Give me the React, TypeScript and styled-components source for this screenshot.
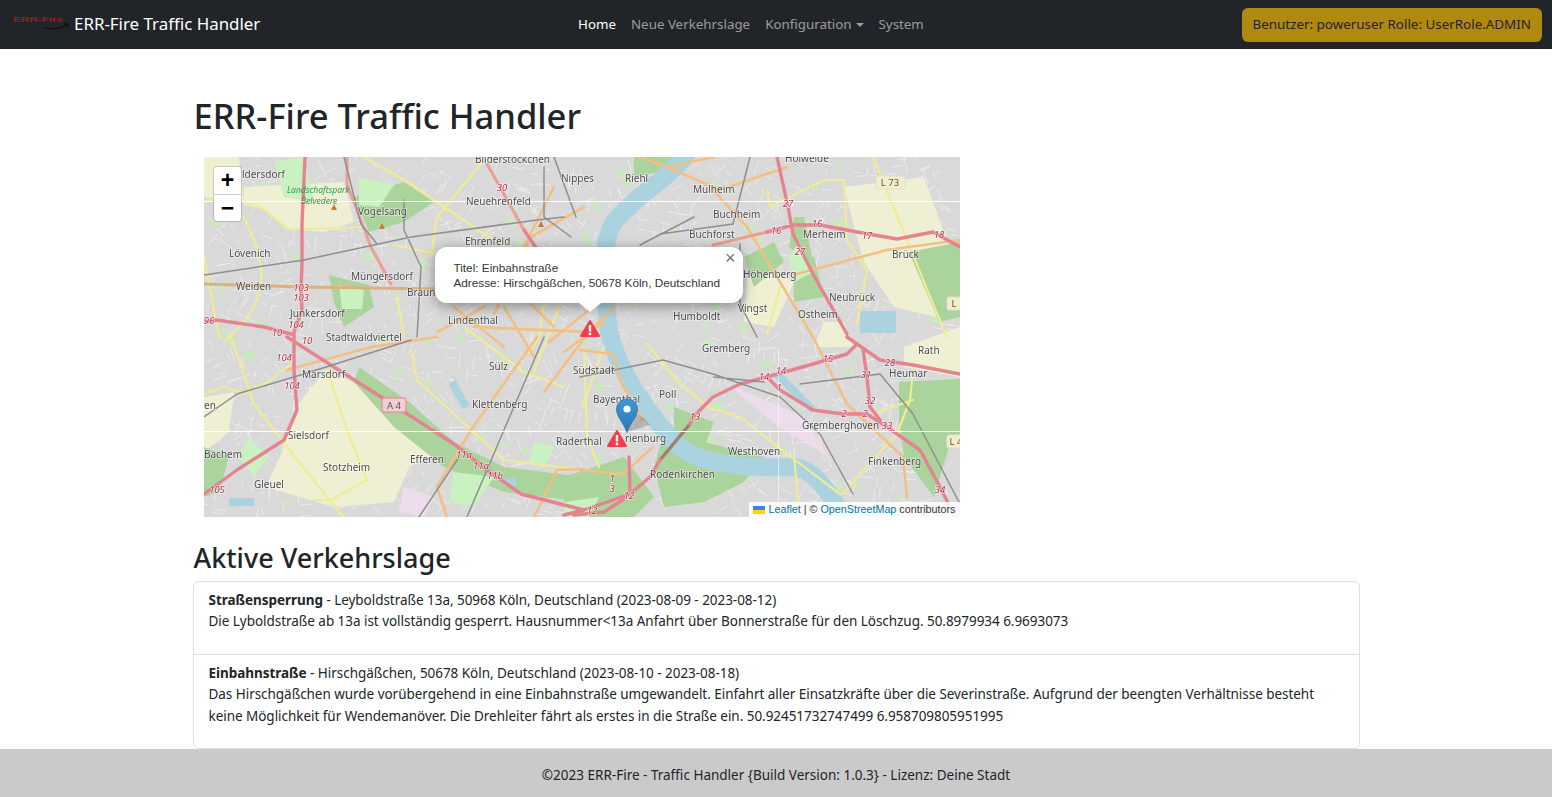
import React from "react";
import styled, { createGlobalStyle } from "styled-components";

const Global = createGlobalStyle`
  html, body { margin: 0; padding: 0; background: #fff; }
  body { font-family: "Noto Sans", "Open Sans", sans-serif; color: #212529; font-size: 13.5px; line-height: 1.5; }
  * { box-sizing: border-box; }
`;
const Page = styled.div`display:flex;flex-direction:column;height:797px;overflow:hidden;`;
const Navbar = styled.nav`height:49px;flex:none;background:#212529;display:flex;justify-content:space-between;align-items:center;padding:0 10px 0 12px;`;
const Brand = styled.div`display:flex;align-items:center;gap:5px;color:#fff;font-size:16.9px;line-height:24px;padding-bottom:1px;`;
const Links = styled.div`display:flex;gap:15px;font-size:13.35px;`;
const NavLink = styled.span<{ $active?: boolean }>`color:${p => (p.$active ? "#fff" : "rgba(255,255,255,.55)")};`;
const Caret = styled.i`display:inline-block;margin-left:4px;vertical-align:2px;border-top:4.3px solid;border-left:4.3px solid transparent;border-right:4.3px solid transparent;`;
const UserBadge = styled.div`height:34px;display:flex;align-items:center;padding:0 11px;border-radius:6px;background:#b0890f;color:#212529;font-size:13.4px;`;
const Main = styled.main`width:1167px;margin:0 auto;flex:1;padding-top:42px;`;
const H1 = styled.h1`margin:0 0 16px 1px;font-size:34.5px;line-height:50px;font-weight:500;`;
const H2 = styled.h2`margin:24px 0 6px 1px;font-size:27px;line-height:34px;font-weight:500;`;
const MapBox = styled.div`position:relative;width:756px;height:360px;margin-left:11px;overflow:hidden;background:#d9d9d9;`;
const MapSvg = styled.svg`display:block;filter:blur(.45px);`;
const MapLabel = styled.text`font:10px "Noto Sans",sans-serif;fill:#4c4c4c;paint-order:stroke;stroke:rgba(255,255,255,.55);stroke-width:1.5px;`;
const RoadNo = styled.text`font:italic 9.5px "Noto Sans",sans-serif;fill:#b3304e;text-anchor:middle;paint-order:stroke;stroke:rgba(255,255,255,.6);stroke-width:1.5px;`;
const ParkLabel = styled.text`font:italic 8.5px "Noto Sans",sans-serif;fill:#2f9a53;`;
const Shield = styled.text`font:9.5px "Noto Sans",sans-serif;fill:#555;text-anchor:middle;`;
const Zoom = styled.div`position:absolute;left:10px;top:10px;width:27px;background:#fff;border-radius:3px;box-shadow:0 0 0 1px rgba(0,0,0,.15);`;
const ZoomBtn = styled.div`height:27px;display:flex;align-items:center;justify-content:center;font:700 23px "Liberation Sans",sans-serif;color:#000;padding-left:1px;& + &{border-top:1px solid #ccc;}`;
const Popup = styled.div`position:absolute;left:231px;top:90px;width:308px;height:56px;background:#fff;border-radius:12px;box-shadow:0 3px 14px rgba(0,0,0,.4);padding:13px 19px;font:11.75px/15px "Liberation Sans",sans-serif;color:#333;white-space:nowrap;`;
const Tip = styled.div`position:absolute;left:144px;top:56px;border-top:9px solid #fff;border-left:11px solid transparent;border-right:11px solid transparent;`;
const Close = styled.span`position:absolute;right:7px;top:1px;font:18px/20px "Liberation Sans",sans-serif;color:#757575;`;
const Attribution = styled.div`position:absolute;right:0;bottom:0;height:15px;padding:0 4px;background:rgba(255,255,255,.85);font:10.75px/15px "Liberation Sans",sans-serif;color:#333;white-space:pre;`;
const AttrLink = styled.span`color:#0078a8;`;
const Flag = styled.svg`margin-right:3px;vertical-align:-0.5px;`;
const List = styled.div`border:1px solid rgba(0,0,0,.125);border-radius:6px;`;
const Item = styled.div<{ $h: number }>`height:${p => p.$h}px;padding:7.5px 15px;line-height:21.6px;letter-spacing:-.04px;& + &{border-top:1px solid rgba(0,0,0,.125);}`;
const Footer = styled.footer`height:48px;flex:none;background:#cacaca;display:flex;align-items:center;justify-content:center;font-size:13.5px;padding-top:4px;`;

const seeded = (seed: number) => {
  let s = seed;
  return () => ((s = (s * 16807) % 2147483647) / 2147483647);
};
const streets = (() => {
  const r = seeded(7);
  let d = "";
  for (let i = 0; i < 1500; i++) {
    const x = r() * 756, y = r() * 360;
    const base = (Math.floor(x / 55) * 1.3 + Math.floor(y / 45) * 0.7) % Math.PI;
    const a = base + (r() > 0.5 ? Math.PI / 2 : 0);
    const l = 4 + r() * 11;
    d += `M${x.toFixed(1)} ${y.toFixed(1)}l${(Math.cos(a) * l).toFixed(1)} ${(Math.sin(a) * l).toFixed(1)}`;
  }
  return d;
})();
const patches = (() => {
  const r = seeded(31);
  let d = "";
  for (let i = 0; i < 130; i++) {
    const x = r() * 756, y = r() * 360, w = 3 + r() * 9, h = 3 + r() * 7;
    d += `M${x.toFixed(1)} ${y.toFixed(1)}h${w.toFixed(1)}l${(r() * 3).toFixed(1)} ${h.toFixed(1)}h${(-w).toFixed(1)}z`;
  }
  return d;
})();

const fields = "M40 30L140 25 150 65 120 75 85 72 60 52 40 48Z M0 0H35L40 45 0 40Z M122 212L178 240 245 290 205 310 190 345 130 350 62 330 78 295 92 250Z M0 240L30 235 25 275 0 295Z M640 30L720 20 745 90 756 140 732 160 690 150 660 105 650 70Z M545 100L590 125 570 170 540 165Z M700 190L756 170 756 220 700 210Z M610 190L650 190 640 165 620 165Z";
const green = "M150 40L200 25 230 45 200 65 165 75Z M155 210L205 245 250 285 300 310 380 320 380 345 300 335 240 310 190 270 150 225Z M360 320L420 300 450 340 430 360 360 360Z M460 275L560 300 540 325 500 345 460 350 450 310Z M695 225L756 222 756 280 745 290 730 340 700 300 695 265Z M705 95L756 85 756 160 735 165Z M590 145L620 140 610 100 590 100Z M585 90L610 110 600 60 590 60Z M430 0L470 0 455 15 430 20Z M395 322L415 322 420 345 398 355Z M550 130L580 105 570 85 540 100Z M470 250L510 265 500 290 470 280Z M0 290L25 300 15 335 0 340Z M125 118L165 128 170 150 140 170 130 145Z";
const lightGreen = "M70 5L100 0 110 45 80 40Z M155 20L190 28 175 50 155 48Z M595 85L610 115 590 125 585 100Z M135 128L160 133 158 152 138 152Z M230 125L250 120 260 140 240 150Z M360 345L395 340 385 360 360 360Z M250 315L290 320 270 350 245 345Z M45 280L65 300 50 320 35 300Z M330 285L350 290 340 310 325 305Z";
const tan = "M200 330L230 340 220 360 195 355Z M520 225L600 260 625 300 575 270Z";

type R = [string, string, number];
const roads: R[] = [
  ["M43 47C50 47 63 53 83 72L113 72 157 70 M160 0L207 27 240 50 280 77 313 97 M280 3L233 60 227 100 M190 88L233 97 M193 140L200 180 M27 180L50 247 83 290 123 340 140 360 M123 213L143 273 163 323 127 343 110 343 M0 237L20 230 40 237 67 223 90 205 M207 193L213 223 300 303 380 313 M563 33L566 50 620 23 640 23 643 83 663 113 653 167 M669 0L699 73 729 147 743 180 M503 250L536 260 583 297 636 337 M443 187L476 227 509 253 M669 257L709 243 M709 213L706 243 693 277 659 313 639 337 M563 177L576 130 M0 45L35 35 M0 100L15 180 M325 195L335 180 345 110 M380 190L383 280 395 310 M20 185C60 150 70 120 40 60 M590 300L596 360 M260 170L320 215 360 230 M355 150L330 215 M400 190L378 250","#efec94",2.2],
  ["M436 0L463 10 516 33 583 10 M463 10L510 0 M509 33L543 70 609 180 M589 118L683 93 756 83 M83 213L167 190 233 180 M333 180L267 273 233 330 243 360 M376 313L419 317 449 290 M376 193L409 197 416 223 439 263 M609 180L643 247 699 300 703 340 M380 312L353 313 330 360 M380 50L327 80 290 157 M280 150L233 175 M330 90L380 130 M300 120L350 170 M350 30L320 90 M385 175L270 170 M385 175L340 235 M395 145L345 185 M250 150L300 190 M300 150L330 200 M360 195L400 165 M385 175L410 150","#f3bf82",2.6],
  ["M0 127L100 130 233 132","#dcb27c",3],
  ["M143 0L143 27 167 90 187 127 M283 7L320 73 M509 88L563 75","#eb9f8f",3],
  ["M456 303L486 267","#a08070",3.5],
  ["M101 0L98 67 98 107 97 133 98 153 90 175 M13 163L60 170 87 177 M83 180L177 240 250 287 283 313 317 337 380 353 409 343 426 337 446 320 456 303 M486 267L489 260 509 240 536 227 563 220 609 207 643 197 653 187 643 180 M653 187L676 203 709 208 756 217 M90 175L90 213 93 253 80 283 33 313 0 337 M563 220L576 233 609 253 639 257 663 257 683 270 716 293 736 330 746 350 M659 193L663 220 666 250 676 263 M573 0L584 50 589 77 609 117 643 177 M563 75L589 68 616 68 653 75 693 82 729 75 756 90 M0 165L13 163 M380 353L360 358 M426 337L425 300 M320 73L345 110 M420 342L400 355 370 358","#e5838f",3.4],
  ["M0 118L100 103 207 80 333 63 360 60 M140 0L157 67 173 87 M200 43L200 73 217 110 213 180 M340 10L340 60 367 80 M340 180L300 273 263 360 M0 260L33 237 100 217 207 183 M376 220L459 203 509 217 576 240 616 277 649 337 M596 227L676 217 709 257 756 347 M546 0L529 67 456 77 M490 60L436 88 M536 87L536 147 553 180 M350 0L372 60 M255 300L215 360 M510 220L560 225","#8f8f8f",1.5],
];

const labels: [number, number, string][] = [
  [271,5.5,"Bilderstockchen"],[357,25,"Nippes"],[421,25,"Riehl"],[489,36,"Mülheim"],[581,5,"Holweide"],[38,21,"ldersdorf"],
  [262,48,"Neuehrenfeld"],[154,58,"Vogelsang"],[509,61,"Buchheim"],[485,81,"Buchforst"],[261,88,"Ehrenfeld"],[25,100,"Lövenich"],
  [599,81,"Merheim"],[688,101,"Brück"],[147,123,"Müngersdorf"],[539,121,"Höhenberg"],[32,133,"Weiden"],[203,139,"Braun"],
  [625,144,"Neubrück"],[86,160,"Junkersdorf"],[244,167,"Lindenthal"],[534,155,"Vingst"],[594,161,"Ostheim"],[469,163,"Humboldt"],
  [122,184,"Stadtwaldviertel"],[498,195,"Gremberg"],[98,221,"Marsdorf"],[285,213,"Sülz"],[369,217,"Südstadt"],[714,197,"Rath"],
  [685,220,"Heumar"],[268,251,"Klettenberg"],[389,246,"Bayenthal"],[455,241,"Poll"],[84,282,"Sielsdorf"],[352,288,"Raderthal"],
  [0,301,"Bachem"],[119,314,"Stotzheim"],[206,306,"Efferen"],[421,285,"rienburg"],[524,298,"Westhoven"],[598,272,"Gremberghoven"],
  [50,331,"Gleuel"],[446,321,"Rodenkirchen"],[664,308,"Finkenberg"],[0,252,"en"],
];
const numbers: [number, number, string][] = [
  [298,34,"30"],[97,134,"103"],[97,144,"103"],[5,167,"96"],[73,179,"10"],[92,171,"104"],[80,204,"104"],[103,187,"10"],[88,232,"104"],
  [260,301,"11a"],[277,312,"11a"],[291,322,"11b"],[13,336,"105"],[584,50,"27"],[572,77,"16"],[613,70,"16"],[596,98,"27"],[663,82,"17"],
  [735,81,"18"],[624,205,"15"],[560,223,"14"],[577,217,"14"],[575,234,"1"],[491,263,"13"],[686,209,"28"],[662,221,"31"],[666,247,"32"],
  [640,260,"2"],[661,260,"2"],[683,272,"33"],[736,336,"34"],[425,342,"12"],[388,357,"12"],[408,325,"1"],[408,335,"3"],
];

const MapArt = () => (
  <MapSvg width="756" height="360" viewBox="0 0 756 360">
    <rect width="756" height="360" fill="#d9d9d9" />
    <path d={streets} stroke="#f2f2f2" strokeWidth=".7" fill="none" />
    <path d={patches} fill="#c6ecb8" opacity=".8" />
    <path d={fields} fill="#eff0d3" />
    <path d={green} fill="#abd39c" />
    <path d={lightGreen} fill="#c9f2c0" />
    <path d={tan} fill="#ecdcec" />
    <path d="M487 -10C470 20 440 30 410 65C395 90 400 130 405 175C415 215 440 250 470 285C490 305 530 312 590 310C610 312 625 335 640 360" fill="none" stroke="#aad3df" strokeWidth="18" />
    <path d="M573 217L609 253" stroke="#aad3df" strokeWidth="8" />
    <path d="M248 225L262 250M660 158h28v14h-28zM25 345h25M300 325h12" stroke="#aad3df" strokeWidth="8" fill="#aad3df" />
    {roads.map(([d, c, w], i) => <path key={i} d={d} fill="none" stroke={c} strokeWidth={w} strokeLinecap="round" strokeLinejoin="round" />)}
    <rect y="44" width="756" height="1" fill="#fff" />
    <rect y="274" width="756" height="1" fill="#fff" />
    <rect x="574" width="1" y="190" height="170" fill="#fff" opacity=".55" />
    <rect x="178" y="241" width="24" height="14" rx="2" fill="#f2ced2" stroke="#e5838f" />
    <Shield x="190" y="251.5">A 4</Shield>
    <rect x="672" y="19" width="29" height="13" rx="2" fill="#f2efc8" stroke="#ddd" />
    <Shield x="686" y="29">L 73</Shield>
    <rect x="743" y="140" width="20" height="13" rx="2" fill="#f2efc8" stroke="#ddd" />
    <Shield x="750" y="150">L</Shield>
    <rect x="743" y="278" width="20" height="13" rx="2" fill="#f2efc8" stroke="#ddd" />
    <Shield x="752" y="288">L 4</Shield>
    <path d="M130 47l3 6h-6zM178 66l3 6h-6zM337 64l3 6h-6z" fill="#c77a35" />
    {labels.map(([x, y, t]) => <MapLabel key={t} x={x} y={y}>{t}</MapLabel>)}
    {numbers.map(([x, y, t], i) => <RoadNo key={i} x={x} y={y}>{t}</RoadNo>)}
    <ParkLabel x="83" y="36">Landschaftspark</ParkLabel>
    <ParkLabel x="97" y="47">Belvedere</ParkLabel>
    {[[386, 172], [413, 282]].map(([x, y], i) => (
      <g key={i} transform={`translate(${x} ${y})`}>
        <path d="M0 -8 L9 7 H-9Z" fill="#ef3e4a" stroke="#ef3e4a" strokeWidth="2" strokeLinejoin="round" />
        <rect x="-1.2" y="-4" width="2.4" height="6.5" fill="#fff" /><circle cy="5" r="1.4" fill="#fff" />
      </g>
    ))}
    <path d="M423 275L433 257 441 262 446 268Z" fill="#555" opacity=".3" />
    <defs><linearGradient id="pin" x1="0" x2="0" y1="0" y2="1"><stop offset="0" stopColor="#3f98d6" /><stop offset="1" stopColor="#2a78b8" /></linearGradient></defs>
    <path d="M423 242c-6 0-10.500 4.500-10.500 10.500c0 7 7 13 10.500 23c3.500-10 10.500-16 10.500-23c0-6-4.500-10.500-10.500-10.500z" fill="url(#pin)" stroke="#2a6ea6" strokeWidth=".7" />
    <circle cx="423" cy="252" r="3.6" fill="#fff" />
  </MapSvg>
);

export default function App() {
  return (
    <Page>
      <Global />
      <Navbar>
        <Brand>
          <svg width="57" height="24" viewBox="0 0 57 24">
            <text x="1" y="10" fontSize="8" fontWeight="700" fill="#9c1c1c" fontFamily="Liberation Sans" textLength="50" lengthAdjust="spacingAndGlyphs">ERR-Fire</text>
            <path d="M32 16q14 3 24-4m-4 0l4 0-1 3" stroke="#0b0b0b" fill="none" />
          </svg>
          ERR-Fire Traffic Handler
        </Brand>
        <Links>
          <NavLink $active>Home</NavLink>
          <NavLink>Neue Verkehrslage</NavLink>
          <NavLink>Konfiguration<Caret /></NavLink>
          <NavLink>System</NavLink>
        </Links>
        <UserBadge>Benutzer: poweruser Rolle: UserRole.ADMIN</UserBadge>
      </Navbar>
      <Main>
        <H1>ERR-Fire Traffic Handler</H1>
        <MapBox>
          <MapArt />
          <Zoom><ZoomBtn>+</ZoomBtn><ZoomBtn>−</ZoomBtn></Zoom>
          <Popup>
            Titel: Einbahnstraße<br />Adresse: Hirschgäßchen, 50678 Köln, Deutschland
            <Close>×</Close><Tip />
          </Popup>
          <Attribution>
            <Flag width="12" height="8" viewBox="0 0 12 8"><rect width="12" height="4" fill="#4C7BE1" /><rect y="4" width="12" height="4" fill="#FFD500" /></Flag>
            <AttrLink>Leaflet</AttrLink> | © <AttrLink>OpenStreetMap</AttrLink> contributors
          </Attribution>
        </MapBox>
        <H2>Aktive Verkehrslage</H2>
        <List>
          <Item $h={72}>
            <b>Straßensperrung</b> - Leyboldstraße 13a, 50968 Köln, Deutschland (2023-08-09 - 2023-08-12)<br />
            Die Lyboldstraße ab 13a ist vollständig gesperrt. Hausnummer&lt;13a Anfahrt über Bonnerstraße für den Löschzug. 50.8979934 6.9693073
          </Item>
          <Item $h={94}>
            <b>Einbahnstraße</b> - Hirschgäßchen, 50678 Köln, Deutschland (2023-08-10 - 2023-08-18)<br />
            Das Hirschgäßchen wurde vorübergehend in eine Einbahnstraße umgewandelt. Einfahrt aller Einsatzkräfte über die Severinstraße. Aufgrund der beengten Verhältnisse besteht keine Möglichkeit für Wendemanöver. Die Drehleiter fährt als erstes in die Straße ein. 50.92451732747499 6.958709805951995
          </Item>
        </List>
      </Main>
      <Footer>©2023 ERR-Fire - Traffic Handler {"{"}Build Version: 1.0.3{"}"} - Lizenz: Deine Stadt</Footer>
    </Page>
  );
}
